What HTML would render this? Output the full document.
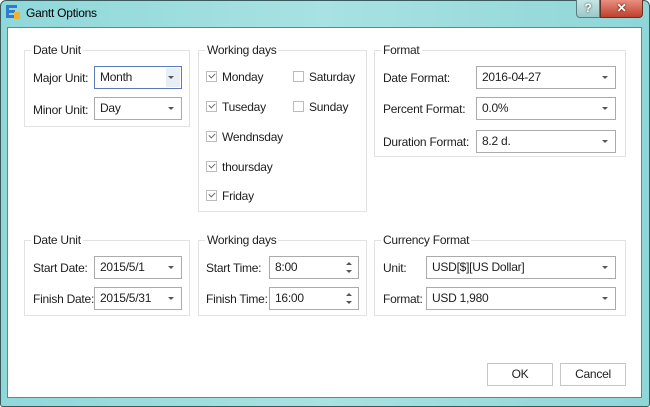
<!DOCTYPE html><html><head><style>
*{margin:0;padding:0;box-sizing:border-box}
body{width:650px;height:407px;overflow:hidden;font-family:"Liberation Sans",sans-serif;font-size:12px;letter-spacing:-0.25px;color:#1e1e1e;background:#fff}
.frame{position:absolute;left:0;top:0;width:650px;height:407px;background:linear-gradient(90deg,#8fd8da,#a8e2e2 50%,#8fd6d8);border:1px solid #3a5a60;border-radius:6px 6px 3px 3px}
.client{position:absolute;left:7px;top:27px;width:635px;height:371px;background:#fff;border:1px solid #5c8a90}
.a{position:absolute}
.grp{position:absolute;border:1px solid #e2e2e2}
.gt{position:absolute;background:#fff;padding:0 2px;top:-8px;left:6px;line-height:14px}
.cb{position:absolute;border:1px solid #ababab;background:#fff;height:23px;line-height:21px;padding-left:5px}
.cb:after{content:"";position:absolute;right:7px;top:9px;border-left:3px solid transparent;border-right:3px solid transparent;border-top:3px solid #555}
.sp{position:absolute;border:1px solid #ababab;background:#fff;height:23px;line-height:21px;padding-left:5px}
.sp:before{content:"";position:absolute;right:6px;top:5px;border-left:3px solid transparent;border-right:3px solid transparent;border-bottom:3px solid #555}
.sp:after{content:"";position:absolute;right:6px;top:13px;border-left:3px solid transparent;border-right:3px solid transparent;border-top:3px solid #555}
.chk{position:absolute;width:11px;height:11px;border:1px solid #bcbcbc;background:#fff}
.chk.on:after{content:"";position:absolute;left:2px;top:1px;width:5px;height:3px;border-left:1px solid #666;border-bottom:1px solid #666;transform:rotate(-45deg)}
.btn{position:absolute;border:1px solid #c6c6c6;background:#fff;height:23px;line-height:21px;text-align:center}
</style></head><body>
<div class="frame"></div>
<div class="a" style="left:6px;top:5px;width:14px;height:14px">
<div class="a" style="left:0;top:0;width:11px;height:3px;background:#2f7bd0"></div>
<div class="a" style="left:0;top:0;width:3px;height:12px;background:#2f7bd0"></div>
<div class="a" style="left:0;top:5px;width:9px;height:3px;background:#2f7bd0"></div>
<div class="a" style="left:0;top:10px;width:11px;height:3px;background:#2f7bd0"></div>
<div class="a" style="left:8px;top:7px;width:6px;height:7px;background:#f0b030"></div>
</div>
<div class="a" style="left:26px;top:6px;font-size:12px;color:#000">Gantt Options</div>
<div class="a" style="left:576px;top:0;width:24px;height:18px;border:1px solid #5a7c80;border-top:none;border-radius:0 0 0 4px;background:linear-gradient(#c6e6e6,#9cc8c8);color:#fff;text-align:center;font-weight:bold;line-height:16px;text-shadow:0 0 2px #333">?</div>
<div class="a" style="left:600px;top:0;width:43px;height:18px;border:1px solid #6a3028;border-top:none;border-radius:0 0 4px 0;background:linear-gradient(#e89080,#c0402c);color:#fff;text-align:center;font-weight:bold;line-height:16px;text-shadow:0 0 2px #400">✕</div>
<div class="client"></div>

<div class="grp" style="left:24px;top:50px;width:166px;height:77px"><span class="gt">Date Unit</span></div>
<div class="a" style="left:33px;top:71px">Major Unit:</div>
<div class="cb" style="left:94px;top:66px;width:88px;border-color:#5b7bb8">Month<span class="a" style="right:1px;top:1px;width:14px;height:19px;background:#e8eef6"></span></div>
<div class="a" style="left:33px;top:103px">Minor Unit:</div>
<div class="cb" style="left:94px;top:97px;width:88px">Day</div>

<div class="grp" style="left:198px;top:50px;width:169px;height:162px"><span class="gt">Working days</span></div>
<div class="chk on" style="left:206px;top:71px"></div><div class="a" style="left:222px;top:70px">Monday</div>
<div class="chk" style="left:293px;top:71px"></div><div class="a" style="left:309px;top:70px">Saturday</div>
<div class="chk on" style="left:206px;top:101px"></div><div class="a" style="left:222px;top:100px">Tuseday</div>
<div class="chk" style="left:293px;top:101px"></div><div class="a" style="left:309px;top:100px">Sunday</div>
<div class="chk on" style="left:206px;top:131px"></div><div class="a" style="left:222px;top:130px">Wendnsday</div>
<div class="chk on" style="left:206px;top:161px"></div><div class="a" style="left:222px;top:160px">thoursday</div>
<div class="chk on" style="left:206px;top:190px"></div><div class="a" style="left:222px;top:189px">Friday</div>

<div class="grp" style="left:374px;top:50px;width:252px;height:107px"><span class="gt">Format</span></div>
<div class="a" style="left:383px;top:71px">Date Format:</div>
<div class="cb" style="left:476px;top:66px;width:140px">2016-04-27</div>
<div class="a" style="left:383px;top:102px">Percent Format:</div>
<div class="cb" style="left:476px;top:97px;width:140px">0.0%</div>
<div class="a" style="left:383px;top:135px">Duration Format:</div>
<div class="cb" style="left:476px;top:130px;width:140px">8.2 d.</div>

<div class="grp" style="left:24px;top:240px;width:166px;height:76px"><span class="gt">Date Unit</span></div>
<div class="a" style="left:33px;top:261px">Start Date:</div>
<div class="cb" style="left:94px;top:256px;width:88px">2015/5/1</div>
<div class="a" style="left:33px;top:292px">Finish Date:</div>
<div class="cb" style="left:94px;top:287px;width:88px">2015/5/31</div>

<div class="grp" style="left:198px;top:240px;width:169px;height:76px"><span class="gt">Working days</span></div>
<div class="a" style="left:206px;top:261px">Start Time:</div>
<div class="sp" style="left:269px;top:256px;width:90px">8:00</div>
<div class="a" style="left:206px;top:292px">Finish Time:</div>
<div class="sp" style="left:269px;top:287px;width:90px">16:00</div>

<div class="grp" style="left:374px;top:240px;width:252px;height:76px"><span class="gt">Currency Format</span></div>
<div class="a" style="left:383px;top:261px">Unit:</div>
<div class="cb" style="left:426px;top:256px;width:190px">USD[$][US Dollar]</div>
<div class="a" style="left:383px;top:292px">Format:</div>
<div class="cb" style="left:426px;top:287px;width:190px">USD 1,980</div>

<div class="btn" style="left:487px;top:363px;width:66px">OK</div>
<div class="btn" style="left:560px;top:363px;width:66px">Cancel</div>
</body></html>
